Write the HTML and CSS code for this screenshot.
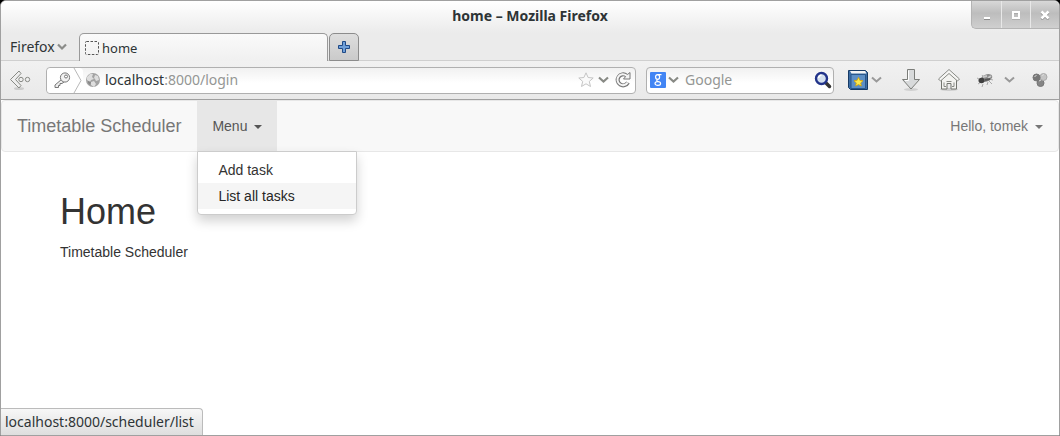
FILE: index.html
```html
<!DOCTYPE html>
<html lang="en">
<head>
<meta charset="utf-8">
<title>home</title>
<link rel="stylesheet" href="styles.css">
</head>
<body>
<div class="window">
  <header class="titlebar">
    <div class="title">home – Mozilla Firefox</div>
    <div class="controls">
      <button class="control" aria-label="Minimize"><svg width="10" height="10"><path d="M2 9h6" stroke="#8c8c8c" stroke-width="2"/><path d="M2 8h6" stroke="#fff" stroke-width="2"/></svg></button>
      <button class="control" aria-label="Maximize"><svg width="10" height="10"><path d="M2 2.500h6v6H2z" fill="none" stroke="#999" stroke-width="2"/><path d="M2 2h6v6H2z" fill="none" stroke="#fff" stroke-width="2"/></svg></button>
      <button class="control" aria-label="Close"><svg width="10" height="10"><path d="M1.500 2.500l7 7m0-7l-7 7" stroke="#888" stroke-width="2.500"/><path d="M1.500 1.500l7 7m0-7l-7 7" stroke="#fff" stroke-width="2.500"/></svg></button>
    </div>
  </header>

  <div class="tabs">
    <button class="app-menu">Firefox<svg width="10" height="8"><path d="M1 1.500l4 4 4-4" fill="none" stroke="#8b8c89" stroke-width="2.200"/></svg></button>
    <button class="tab"><svg width="16" height="16"><rect x="1.500" y="1.500" width="13" height="13" rx="1" fill="none" stroke="#555" stroke-dasharray="2.500 1.500"/></svg>home</button>
    <button class="new-tab" aria-label="New tab"><svg width="14" height="14"><path d="M5.500 1.500h3v4h4v3h-4v4h-3v-4h-4v-3h4z" fill="#6f9fd8" stroke="#204a87" stroke-linejoin="round"/></svg></button>
  </div>

  <div class="toolbar">
    <button class="back" aria-label="Back"><svg width="24" height="22"><ellipse cx="10" cy="19.500" rx="5" ry="1.500" fill="#ccc"/><path d="M10 2L1.500 10.500 10 19l2-2.500-5.500-6L12 4.500z" fill="#eee" stroke="#888a85" stroke-linejoin="round"/><circle cx="12" cy="10.500" r="2.200" fill="#eee" stroke="#888a85"/><circle cx="18.500" cy="10.500" r="2.200" fill="#eee" stroke="#888a85"/></svg></button>
    <div class="address">
      <svg class="identity" width="36" height="25"><path d="M27 0l7 12.500L27 25" fill="none" stroke="#b8b8b8"/><path d="M14.500 11.500L8 17v2.500h3.500v-2H13v-2h2l2-1.500" fill="#eee" stroke="#777" stroke-linejoin="round"/><circle cx="18" cy="9.500" r="4.600" fill="#f2f2f2" stroke="#777"/><circle cx="19" cy="8.500" r="1.500" fill="#fff" stroke="#777"/></svg>
      <svg class="globe" width="16" height="16"><circle cx="8" cy="8" r="7" fill="#a3a3a3"/><path d="M2 5l3-3 3 0-1 3 2 2-3 1-1 2-3-2zM10 3l3 1 1 4-3 1-1-2-1-1zM6 10l3-1 2 3-2 3-3-2z" fill="#dedede"/><path d="M3 9l3 1-1 3-2-2z" fill="#888"/></svg>
      <div class="url"><span>localhost</span>:8000/login</div>
      <svg width="16" height="16"><path d="M8 .8l2.100 4.700 5.100.5-3.900 3.400 1.200 5.100L8 11.800l-4.500 2.700 1.200-5.100L.8 6l5.100-.5z" fill="#fafafa" stroke="#c4c4c4" stroke-linejoin="round"/></svg>
      <svg width="11" height="8"><path d="M1 1.500l4.500 4 4.500-4" fill="none" stroke="#888a85" stroke-width="2.200"/></svg>
      <svg class="reload" width="18" height="18"><path d="M14 11.500A5.500 5.500 0 1 1 12.500 4.500" fill="none" stroke="#777" stroke-width="4"/><path d="M9.500 8h6.500V1.500L13.500 3.500z" fill="#f4f4f4" stroke="#777"/><path d="M13.700 11.500A5.500 5.500 0 1 1 12.500 4.500L14 6" fill="none" stroke="#f4f4f4" stroke-width="2"/></svg>
    </div>
    <div class="search">
      <svg width="16" height="16" viewBox="0 0 16 16"><rect width="16" height="16" rx="1" fill="#4285f4"/><g fill="none" stroke="#fff" stroke-width="1.200"><ellipse cx="7.600" cy="5" rx="2" ry="2.400"/><path d="M7.500 2.600h4M9.300 3.500M7.300 7.600Q5.800 8.800 8.300 9.500"/><ellipse cx="7.800" cy="11.500" rx="2.800" ry="1.900"/></g></svg>
      <svg width="11" height="8"><path d="M1 1.500l4.500 4 4.500-4" fill="none" stroke="#888a85" stroke-width="2.200"/></svg>
      <input class="search-input" type="text" placeholder="Google" aria-label="Search Google">
      <svg width="18" height="18"><path d="M12 12l3.500 3.500" stroke="#333" stroke-width="3.500" stroke-linecap="round"/><circle cx="7.500" cy="7.500" r="5.500" fill="#d4e0ee" stroke="#22348a" stroke-width="2.400"/><path d="M4.500 7a3.500 3.500 0 0 1 3-3" fill="none" stroke="#fff" stroke-width="1.500"/></svg>
    </div>
    <div class="tools">
      <button class="tool bookmarks" aria-label="Bookmarks"><svg width="22" height="24"><path d="M1.500 2.500h17l2 2v17h-17l-2-2z" fill="#3d6ea5" stroke="#173b66"/><path d="M3 3h15l1.500 2.500H4.500z" fill="#f4f4f4"/><path d="M4 6.500h14.500v14H4z" fill="#5d8fc5" stroke="#29578c"/><path d="M11.500 9.500l1.400 2.800 3.100.4-2.300 2.200.6 3.100-2.800-1.500-2.800 1.500.6-3.100L7 12.700l3.100-.4z" fill="#fce94f" stroke="#d9a400" stroke-width=".8"/></svg><svg width="11" height="8"><path d="M1 1.500l4.500 4 4.500-4" fill="none" stroke="#999" stroke-width="2"/></svg></button>
      <button class="tool" aria-label="Downloads"><svg width="22" height="24"><ellipse cx="11" cy="21.500" rx="7" ry="1.500" fill="#d0d0d0"/><path d="M7.500 1.500h7v10h5L11 21l-8.500-9.500h5z" fill="#d8dadb" stroke="#7b7d79" stroke-linejoin="round"/><path d="M8.500 2.500v10H5" fill="none" stroke="#fff"/></svg></button>
      <button class="tool" aria-label="Home page"><svg width="24" height="24"><ellipse cx="12" cy="21.500" rx="9" ry="1.500" fill="#ccc"/><path d="M4.500 11v10h5.500v-5.500h4V21h5.500V11L12 4.500z" fill="#f3f3f0" stroke="#73756f"/><path d="M7 14.500v4h2m8-4v4h-2M9.500 13.500h5" fill="none" stroke="#888a85"/><path d="M12 1.500L1.500 11l2 2L12 5.500l8.500 7.500 2-2z" fill="#f5f5f3" stroke="#888a85" stroke-linejoin="round"/></svg></button>
      <button class="tool debug" aria-label="Firebug"><svg width="18" height="16"><path d="M1 6l4 2M2 12l3-2M6 15l1-3M11 13l1-3M13 7l4 1M6 3l2 3M13 9l3 3" stroke="#aaa"/><ellipse cx="10.500" cy="6" rx="6" ry="3.500" transform="rotate(-20 10.500 6)" fill="#888"/><ellipse cx="5.500" cy="8.500" rx="3" ry="2.800" fill="#404040"/><path d="M7 5l4-1M12 6l3-2" stroke="#c8c8c8" stroke-width="2"/><path d="M9 8l5-1" stroke="#555" stroke-width="2"/></svg><svg width="11" height="8"><path d="M1 1.500l4.500 4 4.500-4" fill="none" stroke="#999" stroke-width="2"/></svg></button>
      <button class="tool" aria-label="Extensions"><svg width="16" height="16"><circle cx="8.500" cy="11" r="3.500" fill="#858585" stroke="#777"/><circle cx="11.500" cy="5" r="3.500" fill="#c4c4c4" stroke="#aaa"/><circle cx="4.500" cy="5.500" r="3.500" fill="#777" stroke="#777"/><path d="M2.500 4.500l2-1M10 3.500l2-1M7 9l2-1" stroke="#ddd"/></svg></button>
    </div>
  </div>

  <main class="page">
    <nav class="navbar">
      <a class="brand" href="#">Timetable Scheduler</a>
      <div class="dropdown">
        <a class="nav-link open" href="#">Menu <span class="caret"></span></a>
        <ul class="dropdown-menu">
          <li><a href="#">Add task</a></li>
          <li><a class="hovered" href="#">List all tasks</a></li>
        </ul>
      </div>
      <a class="nav-link user" href="#">Hello, tomek <span class="caret"></span></a>
    </nav>
    <section class="content">
      <h1>Home</h1>
      <p>Timetable Scheduler</p>
    </section>
  </main>
  <div class="status">localhost:8000/scheduler/list</div>
</div>
</body>
</html>
```
FILE: styles.css
```css
* { box-sizing: border-box; }
body {
  margin: 0;
  background: #000;
  color: #2e3436;
  font: 14px/20px "Noto Sans", "Open Sans", sans-serif;
}
button {
  padding: 0;
  border: 0;
  background: none;
  color: inherit;
  font: inherit;
}
svg { display: block; flex: none; }

.window {
  position: relative;
  display: flex;
  flex-direction: column;
  min-height: 100vh;
  border: 1px solid #a0a0a0;
  border-radius: 6px 6px 0 0;
  background: #fff;
  overflow: hidden;
}
.titlebar {
  display: grid;
  grid-template-columns: 1fr auto 1fr;
  height: 32px;
  background: linear-gradient(#fff, #ebebeb);
}
.title {
  grid-column: 2;
  padding-top: 5px;
  font-weight: 700;
}
.controls {
  display: flex;
  justify-self: end;
  height: 28px;
  border: solid #b4b4b4;
  border-width: 0 0 1px 1px;
  border-radius: 0 0 0 5px;
  background: linear-gradient(#d8d8d8, #bdbdbd 45%, #cfcfcf);
}
.control {
  display: grid;
  place-items: center;
  width: 29px;
}
.control + .control { border-left: 1px solid #e8e8e8; }

.tabs {
  display: flex;
  height: 28px;
  background: #ebebeb;
  box-shadow: inset 0 -1px #cfcfcf;
}
.app-menu {
  display: flex;
  align-items: center;
  gap: 2px;
  width: 78px;
  padding-left: 9px;
}
.tab {
  display: flex;
  align-items: center;
  gap: 2px;
  width: 249px;
  padding: 0 4px;
  border: 1px solid #999;
  border-bottom: 0;
  border-radius: 5px 5px 0 0;
  background: linear-gradient(#fafafa, #f0f0f0);
  font-size: 13px;
}
.new-tab {
  display: grid;
  place-items: center;
  width: 30px;
  margin-left: 1px;
  border: 1px solid #8c8c8c;
  border-radius: 5px 5px 0 0;
  background: linear-gradient(#dedede, #cacaca);
}
.toolbar {
  display: flex;
  align-items: center;
  height: 39px;
  padding: 0 11px 0 8px;
  border-bottom: 1px solid #a0a0a0;
  background: linear-gradient(#f1f1f1, #e9e9e9);
}
.back { width: 37px; }
.address, .search {
  display: flex;
  align-items: center;
  height: 27px;
  border: 1px solid #b0b0b0;
  border-radius: 4px;
  background: linear-gradient(#f1f1f1, #fff 60%);
}
.address {
  flex: 1;
  gap: 4px;
  padding-right: 3px;
}
.globe { margin-left: -2px; }
.identity { background: #fff; border-radius: 4px; }
.url {
  flex: 1;
  color: #949694;
}
.url span { color: #2e3436; }
.reload { margin-left: 1px; }
.search {
  gap: 2px;
  width: 188px;
  margin-left: 10px;
  padding: 0 1px 0 3px;
}
.search-input {
  flex: 1;
  min-width: 0;
  padding: 0 4px;
  border: 0;
  outline: 0;
  background: none;
  font: inherit;
}
.search-input::placeholder { color: #949694; opacity: 1; }
.tools {
  display: flex;
  align-items: center;
  gap: 15px;
  padding-left: 13px;
}
.tool {
  display: flex;
  align-items: center;
}
.bookmarks { gap: 2px; margin-right: 3px; }
.debug { gap: 10px; margin-right: 2px; }

.page {
  flex: 1;
  color: #333;
  font: 14px/20px "Liberation Sans", Arial, sans-serif;
}
.page a { color: inherit; text-decoration: none; }
.navbar {
  display: flex;
  min-height: 52px;
  border: 1px solid #e7e7e7;
  border-radius: 4px;
  background: #f8f8f8;
}
.page .brand {
  padding: 15px 16px 15px 15px;
  color: #777;
  font-size: 18px;
}
.nav-link {
  display: block;
  padding: 15px;
}
.page .open { background: #e7e7e7; color: #555; }
.page .user { margin-left: auto; color: #777; }
.caret {
  display: inline-block;
  margin-left: 3px;
  vertical-align: middle;
  border-top: 4px solid;
  border-right: 4px solid transparent;
  border-left: 4px solid transparent;
}
.dropdown { position: relative; }
.dropdown-menu {
  position: absolute;
  top: 100%;
  left: 0;
  min-width: 160px;
  margin: 0;
  padding: 5px 0;
  border: 1px solid #ccc;
  border-radius: 0 0 4px 4px;
  background: #fff;
  box-shadow: 0 6px 12px rgba(0, 0, 0, 0.18);
  list-style: none;
}
.dropdown-menu a { display: block; padding: 3px 20px; }
.page .hovered { background: #f5f5f5; color: #262626; }
.content { padding: 20px 59px; }
h1 {
  margin: 20px 0 10px;
  font-size: 36px;
  font-weight: 400;
  line-height: 40px;
}
p { margin: 0; }
.status {
  align-self: flex-start;
  padding: 3px 8px 3px 4px;
  border: solid #bbb;
  border-width: 1px 1px 0 0;
  border-radius: 0 4px 0 0;
  background: linear-gradient(#f7f7f7, #dedede);
}
```
